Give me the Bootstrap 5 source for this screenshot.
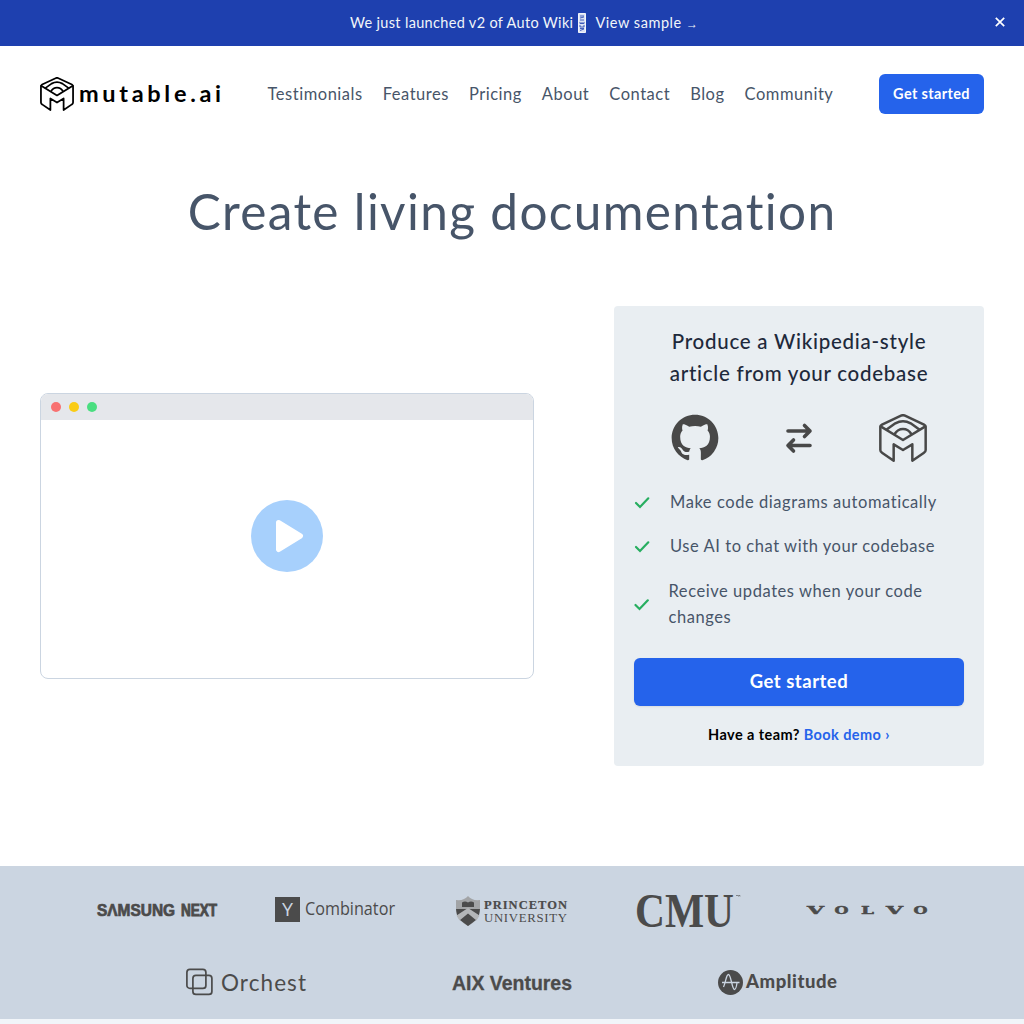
<!DOCTYPE html>
<html lang="en">
<head>
<meta charset="utf-8">
<meta name="viewport" content="width=device-width, initial-scale=1">
<title>mutable.ai</title>
<link href="https://cdn.jsdelivr.net/npm/bootstrap@5.3.0/dist/css/bootstrap.min.css" rel="stylesheet">
<style>
body{font-family:Lato,"Open Sans",sans-serif;background:#f1f5f9;color:#475569;overflow:hidden}
.page-pad{padding-left:40px;padding-right:40px}
.promo{height:46px;background:#1e40af;color:#f1f5f9;font-size:14.5px;padding-left:24px}
.promo .msg{letter-spacing:.33px}
.promo .sample{letter-spacing:.55px;margin-left:9px}
.promo .arrow{font:12px "Liberation Sans",sans-serif;letter-spacing:0}
.promo .close-x{right:19px;top:17px}
.promo .rocket{margin-left:5px}
.site-nav{height:96px}
.site-nav .links{gap:20px}
.site-nav .links a{color:#475569;font-size:16.5px;letter-spacing:.52px;text-decoration:none;white-space:nowrap;line-height:26px}
.btn-go,.btn-go:hover{background:#2563eb;color:#fff;font-weight:700;border:0;border-radius:6px}
.btn-sm-go{width:105px;height:40px;font-size:14.5px;padding:0 0 1px;letter-spacing:.35px}
.btn-lg-go{height:48px;font-size:18.5px;padding:0 0 1px;letter-spacing:.5px;margin-top:10px;box-shadow:0 1px 2px rgba(0,0,0,.08)}
.headline{font-size:49.5px;font-weight:400;letter-spacing:1.35px;line-height:60px;margin:0;padding:39px 0 65px;color:#475569}
.demo-window{width:494px;height:286px;border:1px solid #cbd5e1;border-radius:8px}
.demo-bar{height:26px;background:#e5e7eb;gap:8px;padding-left:10px}
.dot{width:10px;height:10px;border-radius:50%}
.dot-red{background:#f87171}.dot-yellow{background:#facc15}.dot-green{background:#4ade80}
.play-area{padding-top:80px}
.feature-box{width:370px;height:460px;background:#e9eef2;border-radius:4px;padding:19px 20px 0}
.feature-box h2{font-size:20.5px;line-height:32px;color:#1e293b;font-weight:500;letter-spacing:.74px;margin:0 0 25px}
.icon-line{padding:0 37px;color:#484848}
.feature-box ul{margin:27px 0 0;font-size:16.5px;line-height:26px;letter-spacing:.56px}
.feature-box li{margin-bottom:18.3px}
.feature-box li svg{margin-right:20px;flex:none}
.team{font-size:14.5px;font-weight:700;color:#000;margin-top:18px;line-height:22px;letter-spacing:.42px}
.team a{color:#2563eb;text-decoration:none}
.customers{background:#cbd5e1;height:153px;margin-top:100px;padding-top:8px}
.customers .logo-row{height:72px}
.customers svg{fill:#4b4b4b;overflow:visible}
</style>
<script src="https://cdn.jsdelivr.net/npm/bootstrap@5.3.0/dist/js/bootstrap.bundle.min.js"></script>
</head>
<body>
<svg width="0" height="0" class="position-absolute" aria-hidden="true">
<symbol id="cube" viewBox="0 0 144 144"><g fill="none" stroke="currentColor" stroke-width="7.500" stroke-linejoin="round" stroke-linecap="round"><path d="M4 40Q4 35 9 32L66 5Q72 2 78 5L135 32Q140 35 140 40V108Q140 113 135 116L100 140V91L72 108L44 91V140L9 116Q4 113 4 108Z"/><path d="M5 37L72 78L139 37"/><path d="M24 46L49 28Q72 15 95 28L120 46"/><path d="M47 60Q56 45 72 45T97 60"/></g></symbol>
<symbol id="tick" viewBox="0 0 16 16"><path d="M2 9L6 13L14.300 4.300" fill="none" stroke="#27ae60" stroke-width="2.200" stroke-linecap="round"/></symbol>
</svg>
<div class="promo d-flex align-items-center justify-content-center position-relative">
  <span class="msg">We just launched v2 of Auto Wiki</span>
  <svg class="rocket" width="8" height="20" viewBox="0 0 8 20"><path d="M.5.5H7.500V19.500H.5Z" fill="#dbe2f4" stroke="#f1f5f9"/><path d="M2 3H6M2 5L6 4M2 7H6M2 9V10.500H6V9M4 9V10.500M2 12V14H6V12M2 15.500H6M2 17.500L6 16" fill="none" stroke="#1e40af" stroke-width=".8"/></svg>
  <span class="sample">View sample <span class="arrow">→</span></span>
  <svg class="position-absolute close-x" width="10" height="10" viewBox="0 0 10 10" stroke="#fff" stroke-width="1.700"><path d="M.8.8L9.200 9.200M9.200.8L.8 9.200"/></svg>
</div>
<div class="bg-white">
<nav class="site-nav page-pad d-flex align-items-center justify-content-between">
  <a href="#" class="text-black"><svg class="d-block" width="182" height="36" viewBox="0 0 182 36"><use href="#cube" x="0" y="1" width="34" height="34"/><text x="39" y="25.500" font-weight="700" font-size="23.500" textLength="142" lengthAdjust="spacing" fill="#000">mutable.ai</text></svg></a>
  <div class="links d-flex">
    <a href="#">Testimonials</a><a href="#">Features</a><a href="#">Pricing</a><a href="#">About</a><a href="#">Contact</a><a href="#">Blog</a><a href="#">Community</a>
  </div>
  <button class="btn btn-go btn-sm-go">Get started</button>
</nav>
<h1 class="headline text-center">Create living documentation</h1>
<main class="page-pad d-flex align-items-center justify-content-between">
  <div class="demo-window overflow-hidden d-flex flex-column">
    <div class="demo-bar d-flex align-items-center"><span class="dot dot-red"></span><span class="dot dot-yellow"></span><span class="dot dot-green"></span></div>
    <div class="play-area flex-grow-1 d-flex justify-content-center"><svg width="72" height="72" viewBox="0 0 72 72"><circle cx="36" cy="36" r="36" fill="#a7d0fc"/><path d="M27.500 22.500L49.500 36L27.500 49.500Z" fill="#fff" stroke="#fff" stroke-width="5" stroke-linejoin="round"/></svg></div>
  </div>
  <section class="feature-box">
    <h2 class="text-center">Produce a Wikipedia-style<br>article from your codebase</h2>
    <div class="icon-line d-flex justify-content-between align-items-center">
      <svg width="48" height="48" viewBox="-.22 -.22 16.440 16.440"><path fill="currentColor" d="M8 0C3.580 0 0 3.580 0 8c0 3.540 2.290 6.530 5.470 7.590.4.070.55-.17.55-.38 0-.19-.01-.82-.01-1.490-2.010.37-2.530-.49-2.690-.94-.09-.23-.48-.94-.82-1.130-.28-.15-.68-.52-.01-.53.63-.01 1.080.58 1.230.82.72 1.210 1.870.87 2.330.66.070-.52.280-.87.510-1.070-1.780-.2-3.640-.89-3.640-3.950 0-.87.310-1.590.820-2.150-.08-.2-.36-1.020.080-2.120 0 0 .67-.21 2.200.820.640-.18 1.320-.27 2-.27.680 0 1.360.090 2 .27 1.530-1.040 2.200-.82 2.200-.82.440 1.100.160 1.920.080 2.120.510.560.820 1.270.820 2.150 0 3.070-1.870 3.750-3.650 3.950.290.250.540.730.540 1.480 0 1.070-.01 1.930-.01 2.200 0 .210.150.460.550.380A8.013 8.013 0 0016 8c0-4.420-3.580-8-8-8z"/></svg>
      <svg width="28" height="32" viewBox="0 0 28 32" fill="none" stroke="currentColor" stroke-width="3.600" stroke-linecap="round" stroke-linejoin="round"><path d="M3 9H25M19.500 3.500L25 9L19.500 14.500M25 23.500H3M8.500 18L3 23.500L8.500 29"/></svg>
      <svg width="48" height="48"><use href="#cube" width="48" height="48"/></svg>
    </div>
    <ul class="list-unstyled">
      <li class="d-flex align-items-center"><svg width="16" height="16"><use href="#tick"/></svg><span>Make code diagrams automatically</span></li>
      <li class="d-flex align-items-center"><svg width="16" height="16"><use href="#tick"/></svg><span>Use AI to chat with your codebase</span></li>
      <li class="d-flex align-items-center"><svg width="14.500" height="16" viewBox="0.500 0 14.500 16"><use href="#tick" width="16" height="16"/></svg><span>Receive updates when your code<br>changes</span></li>
    </ul>
    <button class="btn btn-go btn-lg-go w-100">Get started</button>
    <div class="team text-center">Have a team? <a href="#">Book demo ›</a></div>
  </section>
</main>
<section class="customers page-pad">
  <div class="logo-row d-flex justify-content-evenly align-items-center">
    <svg width="120" height="40" viewBox="0 0 120 40" font-family="Liberation Sans" font-weight="700" stroke="#4b4b4b"><g transform="translate(0 25.500) scale(.84 1)"><text font-size="16" textLength="93" lengthAdjust="spacingAndGlyphs" stroke-width=".7">SΛMSUNG</text><text x="100" font-size="16" textLength="43" lengthAdjust="spacingAndGlyphs" stroke-width=".9">NEXT</text></g></svg>
    <svg width="120" height="40" viewBox="0 0 120 40"><path d="M0 7H25V32H0Z"/><text x="7" y="26" font-size="18" font-family="Open Sans" textLength="11" lengthAdjust="spacingAndGlyphs" fill="#cbd5e1">Y</text><text x="30" y="25" font-size="18.500" font-family="Open Sans" textLength="90" lengthAdjust="spacingAndGlyphs">Combinator</text></svg>
    <svg width="120" height="40" viewBox="0 0 120 40"><path d="M4 10Q12 11 16 6Q20 11 28 10V21Q27 30 16 36Q5 30 4 21Z" fill="#a2a4a6"/><path d="M10 12.500Q13 10.500 16 12.500Q19 10.500 22 12.500V17H10ZM4 19H28L27 25L24 30L16 36L8 30L5 25Z"/><path d="M4.500 25.500L16 18L27.500 25.500L24.500 30.500L16 23.500L7.500 30.500Z" fill="#b4b6b8"/><g font-family="Liberation Serif"><text x="32" y="19" font-size="12.500" font-weight="700" textLength="83" stroke="#4b4b4b" stroke-width=".2">PRINCETON</text><text x="32" y="31.500" font-size="12.800" textLength="83">UNIVERSITY</text></g></svg>
    <svg width="120" height="40" viewBox="0 0 120 40" font-family="Liberation Serif"><text x="6" y="37" font-size="49" font-weight="700" textLength="99" lengthAdjust="spacingAndGlyphs">CMU</text><path d="M107 5.500H109M109.500 6.500V5.500H111V6.500" fill="none" stroke="#4b4b4b" stroke-width=".6"/></svg>
    <svg width="120" height="40" viewBox="0 0 120 40"><g font-family="DejaVu Serif" font-weight="700" font-size="11.700" stroke="#4b4b4b" stroke-width=".45"><text x="0" y="24" textLength="17" lengthAdjust="spacingAndGlyphs">V</text><text x="27.500" y="24" textLength="14" lengthAdjust="spacingAndGlyphs">O</text><text x="54" y="24" textLength="13" lengthAdjust="spacingAndGlyphs">L</text><text x="79" y="24" textLength="17" lengthAdjust="spacingAndGlyphs">V</text><text x="106.500" y="24" textLength="14" lengthAdjust="spacingAndGlyphs">O</text></g></svg>
  </div>
  <div class="logo-row d-flex justify-content-evenly align-items-center">
    <svg width="120" height="40" viewBox="0 0 120 40"><g fill="none" stroke="#4b4b4b" stroke-width="1.700"><rect x=".9" y="7.400" width="19" height="19" rx="3"/><rect x="6.900" y="13.400" width="19" height="19" rx="3"/></g><text x="35" y="28.500" font-size="22.500" textLength="85">Orchest</text></svg>
    <svg width="120" height="40" viewBox="0 0 120 40"><text x="0" y="27.500" font-family="Liberation Sans" font-size="19.800" font-weight="700" textLength="120" lengthAdjust="spacingAndGlyphs" stroke="#4b4b4b" stroke-width=".3">AIX Ventures</text></svg>
    <svg width="120" height="40" viewBox="0 0 120 40"><circle cx="12.500" cy="20.500" r="12.500"/><path d="M4 20.500H21.500M5.500 25C8 20 8 12.500 10.500 12.500S14 27.500 16.500 27.500Q18 27.500 19 21" fill="none" stroke="#cbd5e1" stroke-width="1.300"/><text x="28" y="26" font-size="18.500" font-weight="900" textLength="91">Amplitude</text></svg>
  </div>
</section>
</div>
</body>
</html>
